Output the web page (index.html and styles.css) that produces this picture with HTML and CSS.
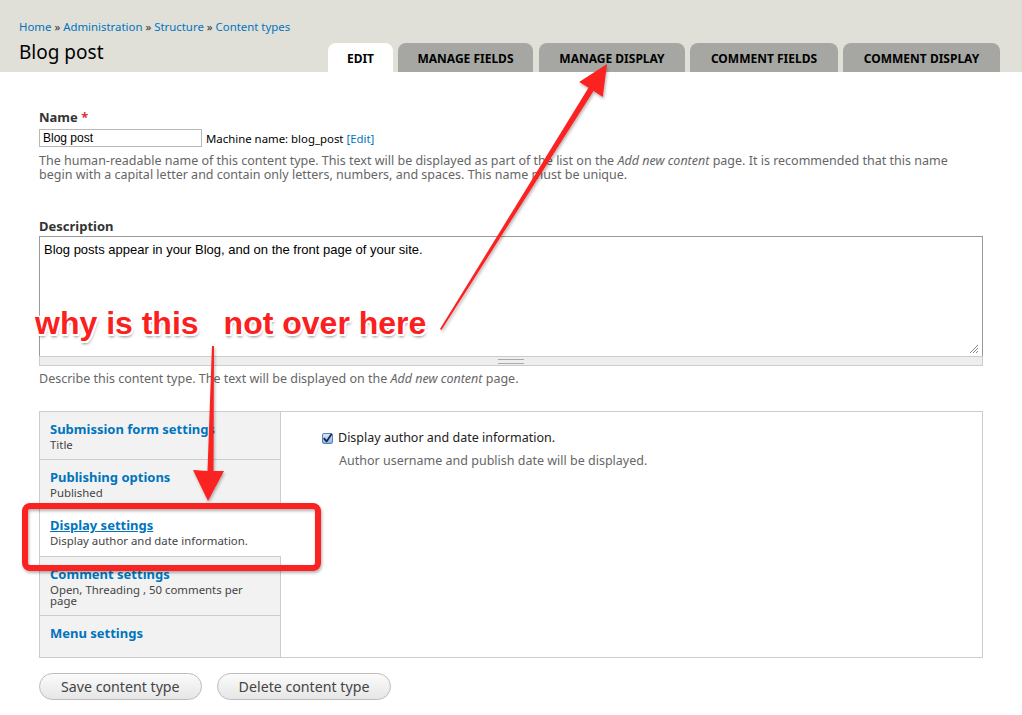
FILE: index.html
```html
<!DOCTYPE html>
<html>
  <head>
    <meta charset="UTF-8" />
    <title>Blog post | Content types</title>
    <link rel="stylesheet" href="styles.css">
  </head>
  <body>
    <div class="header">
      <div class="breadcrumb">
        <a href="#">Home</a> » <a href="#">Administration</a> » <a href="#">Structure</a> » <a href="#">Content types</a>
      </div>
      <div class="title-row">
        <h1>Blog post</h1>
        <ul class="tabs">
          <li class="tab active">Edit</li>
          <li class="tab tab-fields">Manage fields</li>
          <li class="tab tab-display">Manage display</li>
          <li class="tab tab-cfields">Comment fields</li>
          <li class="tab tab-cdisplay">Comment display</li>
        </ul>
      </div>
    </div>

    <div class="content">
      <div class="form-item">
        <label class="form-label">Name <span class="required">*</span></label>
        <div class="name-row">
          <input type="text" class="form-text" value="Blog post" />
          <span class="machine-name">Machine name: blog_post <a href="#">[Edit]</a></span>
        </div>
        <div class="description">The human-readable name of this content type. This text will be displayed as part of the list on the <em>Add new content</em> page. It is recommended that this name begin with a capital letter and contain only letters, numbers, and spaces. This name must be unique.</div>
      </div>

      <div class="form-item desc-item">
        <label class="form-label">Description</label>
        <div class="textarea-wrap">
          <div class="textarea">Blog posts appear in your Blog, and on the front page of your site.
            <svg class="resize" width="10" height="10" viewBox="0 0 10 10">
              <path d="M9 1 L1 9 M9 4 L4 9 M9 7 L7 9" stroke="#888" stroke-width="1" fill="none" />
            </svg>
          </div>
          <div class="grippie"><span></span></div>
        </div>
        <div class="description">Describe this content type. The text will be displayed on the <em>Add new content</em> page.</div>
      </div>

      <div class="vertical-tabs">
        <ul class="vtab-list">
          <li class="vtab">
            <a href="#">Submission form settings</a>
            <span class="summary">Title</span>
          </li>
          <li class="vtab">
            <a href="#">Publishing options</a>
            <span class="summary">Published</span>
          </li>
          <li class="vtab selected">
            <a href="#">Display settings</a>
            <span class="summary">Display author and date information.</span>
          </li>
          <li class="vtab">
            <a href="#">Comment settings</a>
            <span class="summary">Open, Threading , 50 comments per page</span>
          </li>
          <li class="vtab">
            <a href="#">Menu settings</a>
          </li>
        </ul>
        <div class="vtab-pane">
          <div class="checkbox-row">
            <span class="checkbox">
              <svg width="11" height="11" viewBox="0 0 11 11">
                <path d="M2.2 5.6 L4.6 8.4 L9.2 1.6" stroke="#1e2a3a" stroke-width="1.8" fill="none" stroke-linecap="round" stroke-linejoin="round" />
              </svg>
            </span>
            <span class="checkbox-label">Display author and date information.</span>
          </div>
          <div class="pane-description">Author username and publish date will be displayed.</div>
        </div>
      </div>

      <div class="actions">
        <button class="button">Save content type</button>
        <button class="button">Delete content type</button>
      </div>
    </div>

    <!-- screenshot annotations -->
    <div class="annotations">
      <svg class="marks" width="1022" height="715" viewBox="0 0 1022 715">
        <defs>
          <filter id="shadow" x="-20%" y="-20%" width="140%" height="140%">
            <feDropShadow dx="1" dy="2" stdDeviation="1.5" flood-color="#000" flood-opacity="0.3" />
          </filter>
        </defs>
        <g fill="#fb2020" filter="url(#shadow)">
          <polygon points="440,329 588.5,87.8 579.2,81.9 607,64 602.8,96.9 593.5,91 441.5,330" />
          <polygon points="212,346 214,346 213.5,471 224,471 208,501 193,470 207.5,471" />
        </g>
        <rect x="25" y="506" width="293" height="62" rx="5" ry="5" fill="none" stroke="#fb2020" stroke-width="6" filter="url(#shadow)" />
      </svg>
      <div class="note">
        <span>why is this</span>
        <span>not over here</span>
      </div>
    </div>
  </body>
</html>
```

FILE: styles.css
```css
body {
  margin: 0;
  width: 1022px;
  height: 715px;
  position: relative;
  overflow: hidden;
  font-family: "Noto Sans", "DejaVu Sans", sans-serif;
  font-size: 12.5px;
  color: #333;
  background-color: white;
}

a {
  color: #0074bd;
  text-decoration: none;
}

ul {
  list-style: none;
  margin: 0;
  padding: 0;
}

/* header */
.header {
  background-color: #e0e0d8;
  padding: 20px 22px 0 19px;
}

.breadcrumb {
  font-size: 11.4px;
  line-height: 14px;
  color: #333;
}

.title-row {
  display: flex;
  align-items: flex-end;
  justify-content: space-between;
  margin-top: 9px;
}

h1 {
  font-size: 19px;
  font-weight: normal;
  line-height: 19px;
  margin: 0 0 10px 0;
  color: #000;
}

.tabs {
  display: flex;
  gap: 5px;
}

.tab {
  height: 29px;
  line-height: 31px;
  padding: 0 18px;
  background-color: #a6a7a2;
  border-radius: 8px 8px 0 0;
  font-size: 12px;
  font-weight: bold;
  text-transform: uppercase;
  color: #000;
  text-align: center;
  overflow: hidden;
}

.tab.active {
  background-color: white;
  width: 29px;
}

.tab-fields { width: 99px; }
.tab-display { width: 110px; margin-left: 1px; }
.tab-cfields { width: 112px; }
.tab-cdisplay { width: 121px; }

/* form */
.content {
  padding: 0 39px;
}

.form-item {
  padding-top: 37px;
}

.form-label {
  display: block;
  font-size: 13px;
  font-weight: bold;
  line-height: 16px;
}

.required {
  color: #e03030;
}

.name-row {
  display: flex;
  align-items: center;
  margin-top: 4px;
}

.form-text {
  width: 163px;
  height: 18px;
  box-sizing: border-box;
  border: 1px solid #b8b8b8;
  padding: 0 3px;
  font-family: "Liberation Sans", Arial, sans-serif;
  font-size: 12px;
  color: #000;
  margin: 0;
}

.machine-name {
  font-size: 11.4px;
  margin-left: 4px;
  color: #000;
}

.description {
  font-size: 12.5px;
  line-height: 14px;
  color: #666;
  margin-top: 7px;
}

.desc-item {
  padding-top: 36px;
}

.textarea-wrap {
  margin-top: 2px;
}

.textarea {
  position: relative;
  height: 120px;
  border: 1px solid #999;
  border-bottom: none;
  padding: 5px 4px;
  box-sizing: border-box;
  font-family: "Liberation Sans", Arial, sans-serif;
  font-size: 13px;
  line-height: 16px;
  color: #000;
}

.resize {
  position: absolute;
  right: 3px;
  bottom: 2px;
}

.grippie {
  height: 8px;
  background-color: #eee;
  border: 1px solid #ccc;
  display: flex;
  justify-content: center;
  align-items: center;
}

.grippie span {
  width: 26px;
  height: 3px;
  border-top: 1px solid #aaa;
  border-bottom: 1px solid #aaa;
}

.desc-item .description {
  margin-top: 6px;
}

/* vertical tabs */
.vertical-tabs {
  display: flex;
  margin-top: 25px;
  border: 1px solid #ccc;
  height: 247px;
  box-sizing: border-box;
}

.vtab-list {
  width: 240px;
  background-color: #f2f2f2;
  border-right: 1px solid #ccc;
}

.vtab {
  display: flex;
  flex-direction: column;
  padding: 9px 14px 9px 10px;
  border-bottom: 1px solid #ccc;
}

.vtab:last-child {
  border-bottom: none;
}

.vtab a {
  font-size: 13px;
  font-weight: bold;
  line-height: 16px;
}

.vtab .summary {
  font-size: 11.4px;
  line-height: 11px;
  margin-top: 2px;
  color: #444;
}

.vtab.selected {
  background-color: white;
  margin-right: -1px;
  padding-bottom: 10px;
}

.vtab.selected a {
  text-decoration: underline;
}

.vtab-pane {
  flex: 1;
  padding: 18px 0 0 41px;
}

.checkbox-row {
  display: flex;
  align-items: center;
  line-height: 16px;
}

.checkbox {
  width: 11px;
  height: 11px;
  box-sizing: border-box;
  border: 1px solid #5a7fb5;
  border-radius: 2px;
  background: linear-gradient(#d7e7fa, #8bb4ea);
  display: flex;
  margin-right: 5px;
}

.checkbox svg {
  margin: -1px;
}

.checkbox-label {
  font-size: 12.5px;
  color: #222;
}

.pane-description {
  font-size: 12.5px;
  line-height: 14px;
  color: #666;
  margin: 8px 0 0 17px;
}

/* buttons */
.actions {
  display: flex;
  gap: 15px;
  margin-top: 15px;
}

.button {
  height: 27px;
  padding: 0 21px;
  border: 1px solid #bbb;
  border-radius: 14px;
  background: linear-gradient(#fbfbfb, #e6e6e6);
  font-family: "Noto Sans", "DejaVu Sans", sans-serif;
  font-size: 14.2px;
  color: #444;
}

/* annotation overlay */
.annotations {
  position: absolute;
  top: 0;
  left: 0;
  width: 1022px;
  height: 715px;
  pointer-events: none;
}

.marks {
  position: absolute;
  top: 0;
  left: 0;
}

.note {
  position: absolute;
  left: 35px;
  top: 303px;
  display: flex;
  gap: 25px;
  font-family: "Liberation Sans", Arial, sans-serif;
  font-weight: bold;
  font-size: 32px;
  line-height: 40px;
  color: #fb2020;
  text-shadow:
    -2px 0 0 #fff, 2px 0 0 #fff, 0 -2px 0 #fff, 0 2px 0 #fff,
    -1.5px -1.5px 0 #fff, 1.5px 1.5px 0 #fff, -1.5px 1.5px 0 #fff, 1.5px -1.5px 0 #fff,
    1px 3px 3px rgba(0, 0, 0, 0.45);
}
```
